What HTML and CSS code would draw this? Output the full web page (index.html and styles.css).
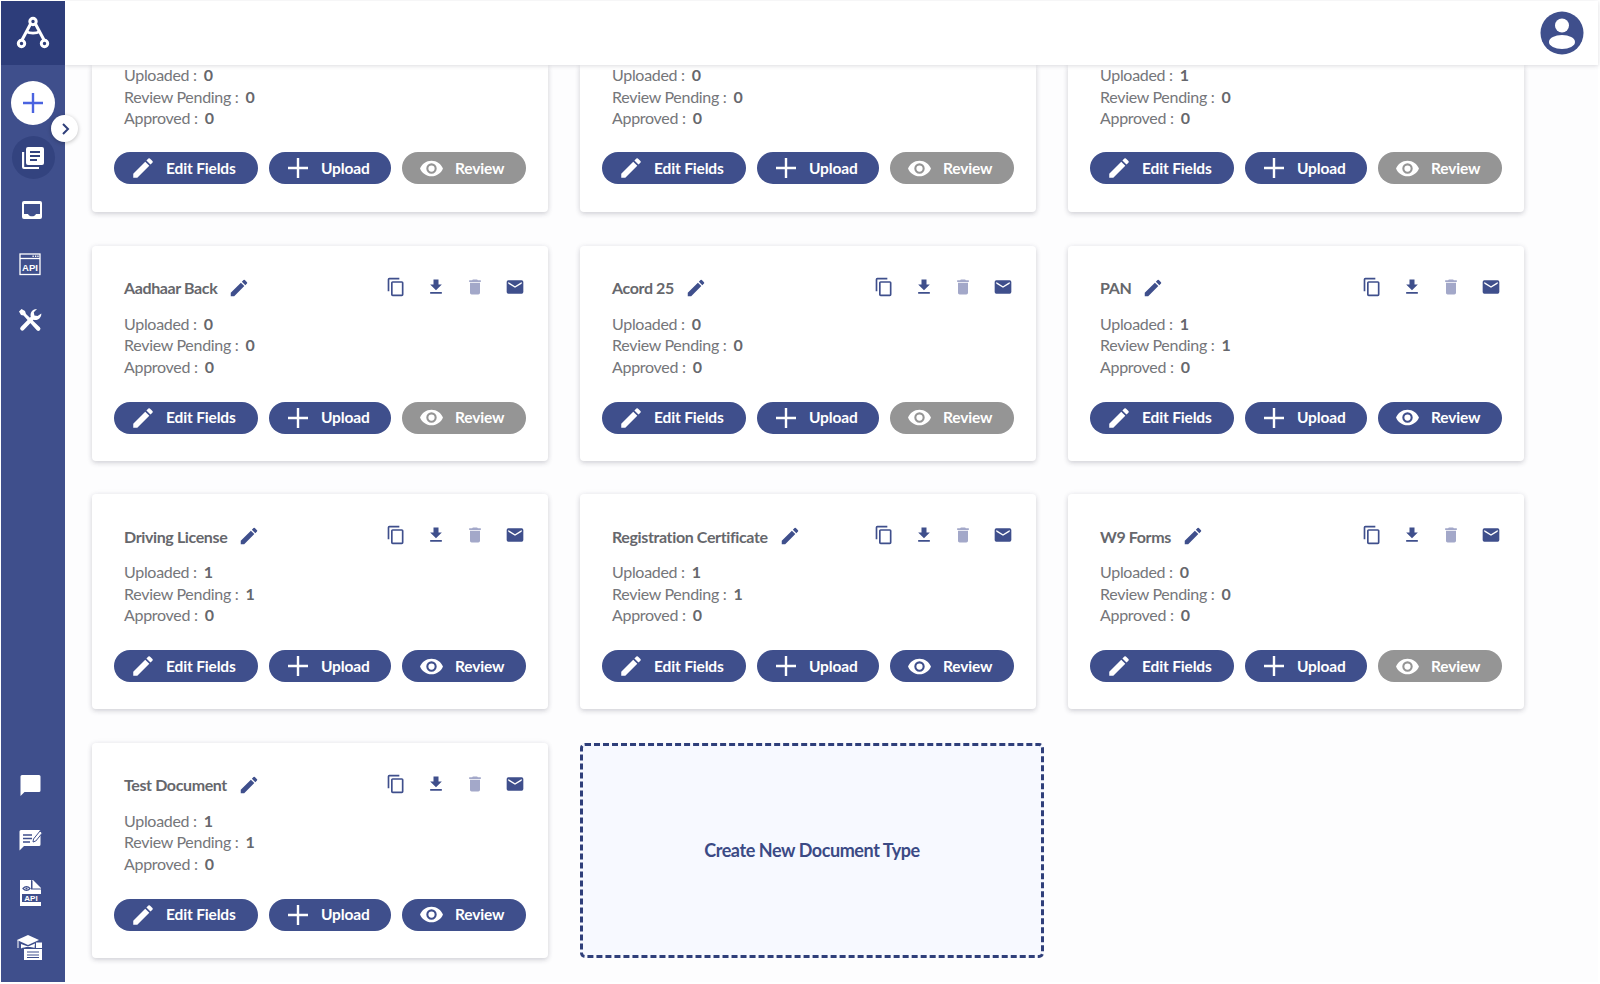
FILE: index.html
```html
<!DOCTYPE html>
<html lang="en">
<head>
<meta charset="utf-8">
<title>Document Types</title>
<link rel="stylesheet" href="styles.css">
</head>
<body>
<svg class="defs" width="0" height="0" aria-hidden="true">
  <symbol id="i-edit" viewBox="0 0 24 24"><path d="M3 17.250V21h3.750L17.810 9.940l-3.750-3.750L3 17.250zM20.710 7.040a1 1 0 0 0 0-1.410l-2.340-2.340a1 1 0 0 0-1.410 0l-1.830 1.830 3.750 3.750 1.830-1.830z"/></symbol>
  <symbol id="i-copy" viewBox="0 0 24 24"><path d="M16 1H4a2 2 0 0 0-2 2v14h2V3h12V1zm3 4H8a2 2 0 0 0-2 2v14a2 2 0 0 0 2 2h11a2 2 0 0 0 2-2V7a2 2 0 0 0-2-2zm0 16H8V7h11v14z"/></symbol>
  <symbol id="i-download" viewBox="0 0 24 24"><path d="M19 9h-4V3H9v6H5l7 7 7-7zM5 18v2h14v-2H5z"/></symbol>
  <symbol id="i-delete" viewBox="0 0 24 24"><path d="M6 19c0 1.100.9 2 2 2h8a2 2 0 0 0 2-2V7H6v12zM19 4h-3.500l-1-1h-5l-1 1H5v2h14V4z"/></symbol>
  <symbol id="i-mail" viewBox="0 0 24 24"><path d="M20 4H4a2 2 0 0 0-2 2v12a2 2 0 0 0 2 2h16a2 2 0 0 0 2-2V6a2 2 0 0 0-2-2zm0 4-8 5-8-5V6l8 5 8-5v2z"/></symbol>
  <symbol id="i-plus" viewBox="0 0 24 24"><path d="M10.800 2h2.400v8.800H22v2.400h-8.800V22h-2.400v-8.800H2v-2.400h8.800z"/></symbol>
  <symbol id="i-eye" viewBox="0 0 24 24"><path d="M12 4.500C7 4.500 2.730 7.610 1 12c1.730 4.390 6 7.500 11 7.500s9.270-3.110 11-7.500c-1.730-4.390-6-7.500-11-7.500zM12 17a5 5 0 1 1 0-10 5 5 0 0 1 0 10zm0-8a3 3 0 1 0 0 6 3 3 0 0 0 0-6z"/></symbol>
</svg>

<aside class="sidebar">
  <div class="logo">
    <svg width="36" height="36" viewBox="0 0 36 36" fill="none" stroke="#fff" stroke-width="3">
      <path d="M15.500 9 7 25M20.500 9 29 25M11 16.500c4 2 10 2 14 0" />
      <circle cx="18" cy="6.500" r="3.200"/><circle cx="6.500" cy="28.500" r="3.200"/><circle cx="29.500" cy="28.500" r="3.200"/>
    </svg>
  </div>
  <div class="nav">
    <button class="nav-add" type="button">
      <svg width="24" height="24" viewBox="0 0 24 24" fill="#4a63e0"><path d="M10.800 2h2.400v8.800H22v2.400h-8.800V22h-2.400v-8.800H2v-2.400h8.800z"/></svg>
    </button>
    <button class="nav-toggle" type="button">
      <svg width="14" height="14" viewBox="0 0 14 14" fill="none" stroke="#2f3f7a" stroke-width="2"><path d="m5 2 5 5-5 5"/></svg>
    </button>
    <div class="nav-item nav-active">
      <svg width="26" height="26" viewBox="0 0 26 26" fill="#fff"><path d="M2 7h2.200v14.500a.6.6 0 0 0 .6.6H19V24H4a2 2 0 0 1-2-2V7z"/><path fill-rule="evenodd" d="M8 2h14a2 2 0 0 1 2 2v14a2 2 0 0 1-2 2H8a2 2 0 0 1-2-2V4a2 2 0 0 1 2-2zm2 4v2h10V6H10zm0 4v2h10v-2H10zm0 4v2h7v-2h-7z"/></svg>
    </div>
    <div class="nav-item nav-inbox">
      <svg width="24" height="24" viewBox="0 0 24 24" fill="#fff"><path fill-rule="evenodd" d="M4 3h16a2 2 0 0 1 2 2v14a2 2 0 0 1-2 2H4a2 2 0 0 1-2-2V5a2 2 0 0 1 2-2zm0 3v10h4c.7 1.500 2.200 2.300 4 2.300s3.300-.8 4-2.300h4V6H4z"/></svg>
    </div>
    <div class="nav-item nav-api">
      <svg width="24" height="24" viewBox="0 0 24 24"><rect x="2" y="2" width="20" height="20.500" fill="none" stroke="#fff" stroke-width="1.300"/><path stroke="#fff" stroke-width="1.300" d="M2 6.500h20"/><path fill="#fff" d="M14.500 3.600h1.300v1.300h-1.300zM17 3.600h1.300v1.300H17zM19.300 3.600h1.300v1.300h-1.300z"/><text x="12" y="18.500" class="svg-label" font-size="9.500" text-anchor="middle">API</text></svg>
    </div>
    <div class="nav-item nav-tools">
      <svg width="26" height="26" viewBox="0 0 26 26" fill="#fff"><path d="M4.500 2 2 4.500l2 3.500 2.500.6 13.300 14.600a2.100 2.100 0 0 0 3-3L9 7 8 4z"/><path d="M24.300 6.500a6 6 0 0 1-7.700 6.300L6.800 23a2.100 2.100 0 0 1-3-3l10-10.200A6 6 0 0 1 20 2l-3.200 3.300.6 3.200 3.200.6z"/></svg>
    </div>
  </div>
  <div class="nav nav-bottom">
    <div class="nav-item">
      <svg width="24" height="24" viewBox="0 0 24 24" fill="#fff"><path d="M4 2h17a1.500 1.500 0 0 1 1.500 1.500v14A1.500 1.500 0 0 1 21 19H6.500L2.500 23V3.500A1.500 1.500 0 0 1 4 2z"/></svg>
    </div>
    <div class="nav-item">
      <svg width="26" height="26" viewBox="0 0 26 26"><path fill="#fff" d="M4 4h18a1.500 1.500 0 0 1 1.500 1.500v13A1.500 1.500 0 0 1 22 20H7l-4.500 4.500v-19A1.500 1.500 0 0 1 4 4z"/><path stroke="#3f4f8c" stroke-width="1.600" d="M6 9h9M6 12.500h9M6 16h7"/><path fill="#fff" stroke="#3f4f8c" d="m16 16 .5-3L23 5l2.300 2-6.500 8z"/></svg>
    </div>
    <div class="nav-item">
      <svg width="26" height="28" viewBox="0 0 26 28"><path fill="#fff" d="M3 1h13l8 8v18H3z"/><path fill="#3f4f8c" d="M15.500 1.500v8h8l1 1H14V1z"/><path fill="none" stroke="#3f4f8c" stroke-width="1.200" d="M6 9.500c2-2.400 5-2.400 7 0-2 2.400-5 2.400-7 0z"/><circle cx="9.500" cy="9.500" r="1.100" fill="#3f4f8c"/><rect x="5" y="15" width="19" height="8" fill="#3f4f8c"/><text x="14" y="22" class="svg-label" font-size="8" text-anchor="middle">API</text></svg>
    </div>
    <div class="nav-item">
      <svg width="28" height="28" viewBox="0 0 28 28" fill="#fff"><path d="M1 7 12 2l11 5-11 5z"/><path d="M5 11v4.500c3.500-2 10-2 13.500-.5l.5-4.500-7 3z"/><path d="M1.500 7h1v8h-1z"/><path fill-rule="evenodd" d="M8 16h18v11H8zm3 2.500v1h12v-1zm0 3v1h12v-1zm0 2.500v1h12v-1z"/><path d="M20 9.500h6V15h-6z"/></svg>
    </div>
  </div>
</aside>

<div class="page">
  <header class="topbar">
    <svg class="avatar" width="44" height="44" viewBox="0 0 44 44"><circle cx="22" cy="22" r="21.500" fill="#3f4f8c"/><circle cx="22" cy="14.500" r="7" fill="#fff"/><ellipse cx="22" cy="31" rx="13" ry="7" fill="#fff"/></svg>
  </header>
  <main class="content">
    <div class="grid">

      <article class="card card-clipped">
        <dl class="stats"><div><dt>Uploaded :</dt><dd>0</dd></div><div><dt>Review Pending :</dt><dd>0</dd></div><div><dt>Approved :</dt><dd>0</dd></div></dl>
        <div class="actions">
          <button class="btn btn-edit" type="button"><svg class="ic-edit"><use href="#i-edit"/></svg>Edit Fields</button>
          <button class="btn btn-upload" type="button"><svg class="ic-plus"><use href="#i-plus"/></svg>Upload</button>
          <button class="btn btn-review off" type="button"><svg class="ic-eye"><use href="#i-eye"/></svg>Review</button>
        </div>
      </article>
      <article class="card card-clipped">
        <dl class="stats"><div><dt>Uploaded :</dt><dd>0</dd></div><div><dt>Review Pending :</dt><dd>0</dd></div><div><dt>Approved :</dt><dd>0</dd></div></dl>
        <div class="actions">
          <button class="btn btn-edit" type="button"><svg class="ic-edit"><use href="#i-edit"/></svg>Edit Fields</button>
          <button class="btn btn-upload" type="button"><svg class="ic-plus"><use href="#i-plus"/></svg>Upload</button>
          <button class="btn btn-review off" type="button"><svg class="ic-eye"><use href="#i-eye"/></svg>Review</button>
        </div>
      </article>
      <article class="card card-clipped">
        <dl class="stats"><div><dt>Uploaded :</dt><dd>1</dd></div><div><dt>Review Pending :</dt><dd>0</dd></div><div><dt>Approved :</dt><dd>0</dd></div></dl>
        <div class="actions">
          <button class="btn btn-edit" type="button"><svg class="ic-edit"><use href="#i-edit"/></svg>Edit Fields</button>
          <button class="btn btn-upload" type="button"><svg class="ic-plus"><use href="#i-plus"/></svg>Upload</button>
          <button class="btn btn-review off" type="button"><svg class="ic-eye"><use href="#i-eye"/></svg>Review</button>
        </div>
      </article>

      <article class="card">
        <div class="card-head"><h2>Aadhaar Back</h2><svg class="ic-title"><use href="#i-edit"/></svg>
          <div class="tools"><svg><use href="#i-copy"/></svg><svg><use href="#i-download"/></svg><svg class="muted"><use href="#i-delete"/></svg><svg><use href="#i-mail"/></svg></div></div>
        <dl class="stats"><div><dt>Uploaded :</dt><dd>0</dd></div><div><dt>Review Pending :</dt><dd>0</dd></div><div><dt>Approved :</dt><dd>0</dd></div></dl>
        <div class="actions">
          <button class="btn btn-edit" type="button"><svg class="ic-edit"><use href="#i-edit"/></svg>Edit Fields</button>
          <button class="btn btn-upload" type="button"><svg class="ic-plus"><use href="#i-plus"/></svg>Upload</button>
          <button class="btn btn-review off" type="button"><svg class="ic-eye"><use href="#i-eye"/></svg>Review</button>
        </div>
      </article>
      <article class="card">
        <div class="card-head"><h2>Acord 25</h2><svg class="ic-title"><use href="#i-edit"/></svg>
          <div class="tools"><svg><use href="#i-copy"/></svg><svg><use href="#i-download"/></svg><svg class="muted"><use href="#i-delete"/></svg><svg><use href="#i-mail"/></svg></div></div>
        <dl class="stats"><div><dt>Uploaded :</dt><dd>0</dd></div><div><dt>Review Pending :</dt><dd>0</dd></div><div><dt>Approved :</dt><dd>0</dd></div></dl>
        <div class="actions">
          <button class="btn btn-edit" type="button"><svg class="ic-edit"><use href="#i-edit"/></svg>Edit Fields</button>
          <button class="btn btn-upload" type="button"><svg class="ic-plus"><use href="#i-plus"/></svg>Upload</button>
          <button class="btn btn-review off" type="button"><svg class="ic-eye"><use href="#i-eye"/></svg>Review</button>
        </div>
      </article>
      <article class="card">
        <div class="card-head"><h2>PAN</h2><svg class="ic-title"><use href="#i-edit"/></svg>
          <div class="tools"><svg><use href="#i-copy"/></svg><svg><use href="#i-download"/></svg><svg class="muted"><use href="#i-delete"/></svg><svg><use href="#i-mail"/></svg></div></div>
        <dl class="stats"><div><dt>Uploaded :</dt><dd>1</dd></div><div><dt>Review Pending :</dt><dd>1</dd></div><div><dt>Approved :</dt><dd>0</dd></div></dl>
        <div class="actions">
          <button class="btn btn-edit" type="button"><svg class="ic-edit"><use href="#i-edit"/></svg>Edit Fields</button>
          <button class="btn btn-upload" type="button"><svg class="ic-plus"><use href="#i-plus"/></svg>Upload</button>
          <button class="btn btn-review" type="button"><svg class="ic-eye"><use href="#i-eye"/></svg>Review</button>
        </div>
      </article>

      <article class="card">
        <div class="card-head"><h2>Driving License</h2><svg class="ic-title"><use href="#i-edit"/></svg>
          <div class="tools"><svg><use href="#i-copy"/></svg><svg><use href="#i-download"/></svg><svg class="muted"><use href="#i-delete"/></svg><svg><use href="#i-mail"/></svg></div></div>
        <dl class="stats"><div><dt>Uploaded :</dt><dd>1</dd></div><div><dt>Review Pending :</dt><dd>1</dd></div><div><dt>Approved :</dt><dd>0</dd></div></dl>
        <div class="actions">
          <button class="btn btn-edit" type="button"><svg class="ic-edit"><use href="#i-edit"/></svg>Edit Fields</button>
          <button class="btn btn-upload" type="button"><svg class="ic-plus"><use href="#i-plus"/></svg>Upload</button>
          <button class="btn btn-review" type="button"><svg class="ic-eye"><use href="#i-eye"/></svg>Review</button>
        </div>
      </article>
      <article class="card">
        <div class="card-head"><h2>Registration Certificate</h2><svg class="ic-title"><use href="#i-edit"/></svg>
          <div class="tools"><svg><use href="#i-copy"/></svg><svg><use href="#i-download"/></svg><svg class="muted"><use href="#i-delete"/></svg><svg><use href="#i-mail"/></svg></div></div>
        <dl class="stats"><div><dt>Uploaded :</dt><dd>1</dd></div><div><dt>Review Pending :</dt><dd>1</dd></div><div><dt>Approved :</dt><dd>0</dd></div></dl>
        <div class="actions">
          <button class="btn btn-edit" type="button"><svg class="ic-edit"><use href="#i-edit"/></svg>Edit Fields</button>
          <button class="btn btn-upload" type="button"><svg class="ic-plus"><use href="#i-plus"/></svg>Upload</button>
          <button class="btn btn-review" type="button"><svg class="ic-eye"><use href="#i-eye"/></svg>Review</button>
        </div>
      </article>
      <article class="card">
        <div class="card-head"><h2>W9 Forms</h2><svg class="ic-title"><use href="#i-edit"/></svg>
          <div class="tools"><svg><use href="#i-copy"/></svg><svg><use href="#i-download"/></svg><svg class="muted"><use href="#i-delete"/></svg><svg><use href="#i-mail"/></svg></div></div>
        <dl class="stats"><div><dt>Uploaded :</dt><dd>0</dd></div><div><dt>Review Pending :</dt><dd>0</dd></div><div><dt>Approved :</dt><dd>0</dd></div></dl>
        <div class="actions">
          <button class="btn btn-edit" type="button"><svg class="ic-edit"><use href="#i-edit"/></svg>Edit Fields</button>
          <button class="btn btn-upload" type="button"><svg class="ic-plus"><use href="#i-plus"/></svg>Upload</button>
          <button class="btn btn-review off" type="button"><svg class="ic-eye"><use href="#i-eye"/></svg>Review</button>
        </div>
      </article>

      <article class="card">
        <div class="card-head"><h2>Test Document</h2><svg class="ic-title"><use href="#i-edit"/></svg>
          <div class="tools"><svg><use href="#i-copy"/></svg><svg><use href="#i-download"/></svg><svg class="muted"><use href="#i-delete"/></svg><svg><use href="#i-mail"/></svg></div></div>
        <dl class="stats"><div><dt>Uploaded :</dt><dd>1</dd></div><div><dt>Review Pending :</dt><dd>1</dd></div><div><dt>Approved :</dt><dd>0</dd></div></dl>
        <div class="actions">
          <button class="btn btn-edit" type="button"><svg class="ic-edit"><use href="#i-edit"/></svg>Edit Fields</button>
          <button class="btn btn-upload" type="button"><svg class="ic-plus"><use href="#i-plus"/></svg>Upload</button>
          <button class="btn btn-review" type="button"><svg class="ic-eye"><use href="#i-eye"/></svg>Review</button>
        </div>
      </article>
      <button class="create" type="button">Create New Document Type</button>

    </div>
  </main>
</div>
</body>
</html>
```
FILE: styles.css
```css
* { box-sizing: border-box; }
html, body { height: 100%; }
body {
  margin: 0;
  padding: 1px 2px 2px 1px;
  display: flex;
  background: #fff;
  font-family: Lato, "Open Sans", sans-serif;
  overflow: hidden;
}
.defs { position: absolute; }
button { font-family: inherit; border: 0; padding: 0; cursor: pointer; }

/* Sidebar */
.sidebar {
  flex: 0 0 64px;
  background: #3f4f8c;
  display: flex;
  flex-direction: column;
  position: relative;
  z-index: 2;
}
.logo {
  height: 64px;
  background: #2d3d7a;
  display: flex;
  align-items: center;
  justify-content: center;
  flex: none;
}
.nav {
  display: flex;
  flex-direction: column;
  align-items: center;
  position: relative;
  padding: 16px 0 0 0;
}
.nav-add {
  width: 44px;
  height: 44px;
  border-radius: 50%;
  background: #fff;
  display: flex;
  align-items: center;
  justify-content: center;
}
.nav-toggle {
  position: absolute;
  left: 50px;
  top: 50px;
  width: 27px;
  height: 27px;
  border-radius: 50%;
  background: #fff;
  box-shadow: 0 1px 4px rgba(0, 0, 0, .25);
  display: flex;
  align-items: center;
  justify-content: center;
}
.nav-item {
  width: 44px;
  height: 44px;
  display: flex;
  align-items: center;
  justify-content: center;
}
.nav-active {
  margin-top: 11px;
  background: #33437f;
  border-radius: 50%;
  width: 43px;
  height: 43px;
}
.nav-inbox { margin-top: 9px; margin-left: -2px; }
.nav-api { margin-top: 10px; margin-left: -6px; }
.nav-tools { margin-top: 12px; margin-left: -6px; }
.nav-bottom {
  margin-top: auto;
  padding: 0 0 13px 0;
  gap: 10px;
}
.nav-bottom .nav-item { margin-left: -6px; }
.svg-label {
  font-family: "Liberation Sans", sans-serif;
  font-weight: 700;
  fill: #fff;
}

/* Page */
.page {
  flex: 1;
  min-width: 0;
  display: flex;
  flex-direction: column;
  background: #fdfdfe;
}
.topbar {
  flex: 0 0 64px;
  background: #fff;
  box-shadow: 0 1px 4px rgba(60, 60, 80, .18);
  display: flex;
  align-items: center;
  justify-content: flex-end;
  padding-right: 14px;
  position: relative;
  z-index: 1;
}
.content {
  flex: 1;
  min-height: 0;
  overflow: hidden;
  padding-left: 27px;
}
.grid {
  display: grid;
  grid-template-columns: repeat(3, 456px);
  column-gap: 32px;
  row-gap: 33.500px;
  align-items: start;
}

/* Cards */
.card {
  height: 215px;
  background: #fff;
  border-radius: 4px;
  box-shadow: 0 2px 5px rgba(60, 60, 80, .2), 0 0 6px rgba(60, 60, 80, .05);
  padding: 30px 22px 0 22px;
}
.card-clipped {
  height: 147px;
  padding-top: 0;
  border-radius: 0 0 4px 4px;
}
.card-clipped .stats { margin-top: -1px; margin-bottom: 23px; }
.card-head {
  display: flex;
  align-items: center;
  height: 24px;
  padding-left: 10px;
  margin-bottom: 13px;
}
.card-head h2 {
  margin: 0;
  font-size: 16px;
  font-weight: 700;
  letter-spacing: -.38px;
  color: #66676c;
}
.ic-title {
  width: 22px;
  height: 22px;
  margin-left: 11px;
  fill: #3f4f8c;
}
.tools {
  display: flex;
  gap: 19.700px;
  margin: 0 1px 2px auto;
}
.tools svg {
  width: 20px;
  height: 20px;
  fill: #3f4f8c;
}
.tools svg.muted { fill: #a3a8c9; }

.stats {
  margin: 0 0 24px;
  padding-left: 10px;
  font-size: 16px;
  line-height: 21.700px;
  letter-spacing: -.3px;
  color: #75767a;
}
.stats div { display: flex; gap: 7px; }
.stats dt { font-weight: 400; }
.stats dd {
  margin: 0;
  font-weight: 700;
  color: #66676c;
}

.actions { display: flex; gap: 11px; }
.btn {
  height: 32px;
  border-radius: 16px;
  background: #3f4f8c;
  color: #fff;
  font-size: 15.500px;
  font-weight: 700;
  letter-spacing: -.15px;
  display: flex;
  align-items: center;
  padding-bottom: 1px;
}
.btn svg { fill: #fff; flex: none; margin-top: 1px; }
.btn-edit { width: 144px; padding-left: 16px; }
.btn-upload { width: 122px; padding-left: 17px; }
.btn-review { width: 124px; padding-left: 17px; }
.btn.off { background: #959595; }
.ic-edit { width: 26px; height: 26px; margin-right: 10px; }
.ic-plus { width: 24px; height: 24px; margin-right: 11px; }
.ic-eye { width: 25px; height: 25px; margin-right: 11px; }

.create {
  width: 464px;
  height: 215px;
  border: 3px dashed #2f3f7a;
  border-radius: 5px;
  background: #f7f9ff;
  color: #3b4a85;
  font-size: 18px;
  font-weight: 700;
  letter-spacing: -.42px;
}
```
